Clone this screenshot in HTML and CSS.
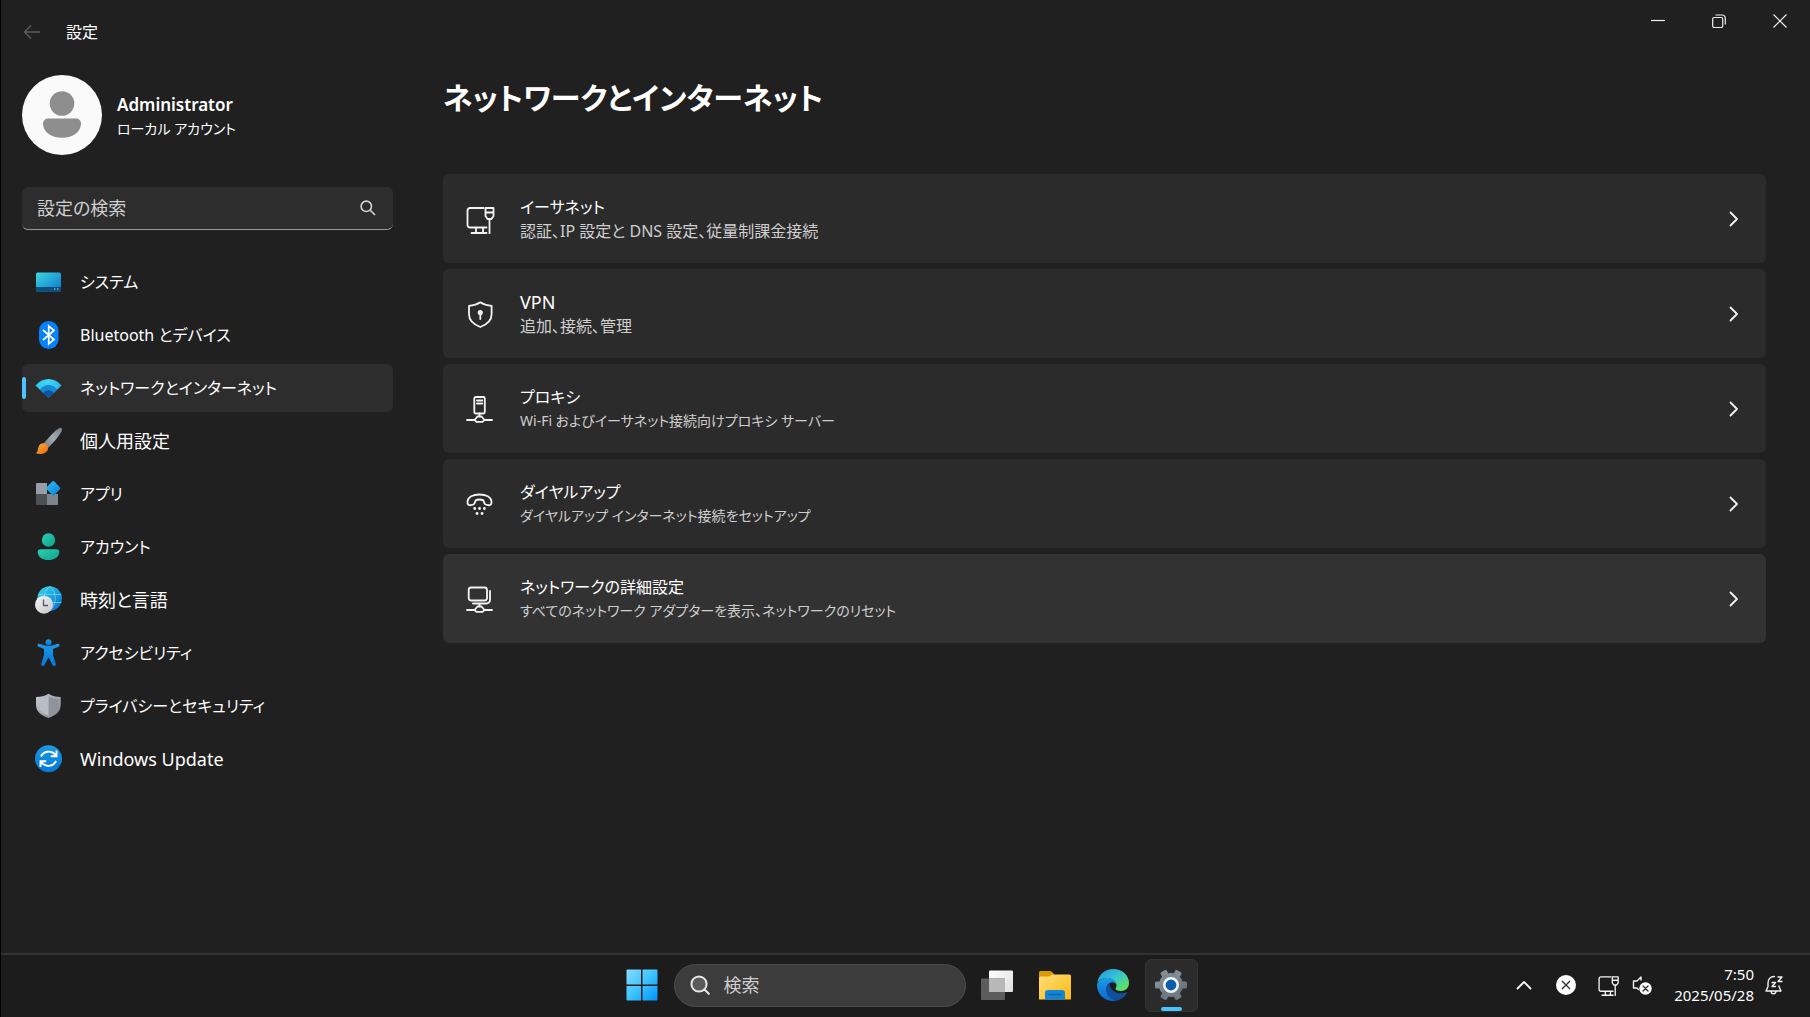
FILE: index.html
```html
<!DOCTYPE html>
<html lang="ja">
<head>
<meta charset="utf-8">
<meta name="viewport" content="width=device-width, initial-scale=1">
<title>設定</title>
<link rel="stylesheet" href="styles.css">
</head>
<body>
<svg class="defs" aria-hidden="true">
  <defs>
    <linearGradient id="g-screen" x1="0" y1="0" x2="1" y2="1"><stop offset="0" stop-color="#3cd8e2"/><stop offset="1" stop-color="#0c74cc"/></linearGradient>
    <linearGradient id="g-wifi" x1="0" y1="0" x2="1" y2="0"><stop offset="0" stop-color="#30c4ec"/><stop offset=".5" stop-color="#40d4f8"/><stop offset="1" stop-color="#28b4ec"/></linearGradient>
    <linearGradient id="g-handle" x1="1" y1="0" x2="0" y2="1"><stop offset="0" stop-color="#77808a"/><stop offset=".5" stop-color="#a4acb2"/><stop offset="1" stop-color="#6d767e"/></linearGradient>
    <linearGradient id="g-bristle" x1="0" y1="0" x2="1" y2="1"><stop offset="0" stop-color="#fcb52f"/><stop offset="1" stop-color="#e8641a"/></linearGradient>
    <linearGradient id="g-diamond" x1="0" y1="0" x2="1" y2="1"><stop offset="0" stop-color="#2fc2f0"/><stop offset="1" stop-color="#0a78d4"/></linearGradient>
    <linearGradient id="g-green" x1="0" y1="0" x2="1" y2="1"><stop offset="0" stop-color="#2bcfb4"/><stop offset="1" stop-color="#10a08a"/></linearGradient>
    <linearGradient id="g-globe" x1="0" y1="0" x2="1" y2="1"><stop offset="0" stop-color="#38dcec"/><stop offset="1" stop-color="#0668c8"/></linearGradient>
    <linearGradient id="g-clock" x1="0" y1="0" x2="1" y2="1"><stop offset="0" stop-color="#f6f6f6"/><stop offset="1" stop-color="#c4c6ca"/></linearGradient>
    <linearGradient id="g-blue" x1="0" y1="0" x2="0" y2="1"><stop offset="0" stop-color="#1c98e6"/><stop offset="1" stop-color="#0478d6"/></linearGradient>
    <linearGradient id="g-shield" x1="0" y1="0" x2="1" y2="1"><stop offset="0" stop-color="#c8ccd2"/><stop offset="1" stop-color="#7e868e"/></linearGradient>
    <linearGradient id="g-start" x1="0" y1="0" x2="32" y2="32" gradientUnits="userSpaceOnUse"><stop offset="0" stop-color="#8cdcff"/><stop offset=".5" stop-color="#3cc4ff"/><stop offset="1" stop-color="#0090fc"/></linearGradient>
    <linearGradient id="g-paper" x1="0" y1="0" x2="1" y2="1"><stop offset="0" stop-color="#ffffff"/><stop offset="1" stop-color="#dedede"/></linearGradient>
    <linearGradient id="g-folder" x1="0" y1="0" x2="1" y2="1"><stop offset="0" stop-color="#ffdf7a"/><stop offset="1" stop-color="#fcb80e"/></linearGradient>
    <linearGradient id="g-edge-top" x1="0" y1="0" x2="1" y2="1"><stop offset="0" stop-color="#2492dc"/><stop offset=".45" stop-color="#34c4d4"/><stop offset="1" stop-color="#6cea3c"/></linearGradient>
    <linearGradient id="g-edge-side" x1="0" y1="0" x2="0" y2="1"><stop offset="0" stop-color="#1a9ce8"/><stop offset="1" stop-color="#0b68cc"/></linearGradient>
    <linearGradient id="g-gear" x1="0" y1="0" x2="32" y2="32" gradientUnits="userSpaceOnUse"><stop offset="0" stop-color="#8f99a2"/><stop offset="1" stop-color="#5f6a74"/></linearGradient>
    <symbol id="ethernet" viewBox="0 0 30 30"><path d="M17.500 4H4a2.500 2.500 0 0 0-2.500 2.500v14.500a2.500 2.500 0 0 0 2.500 2.500h16.500M10 23.500V29M17 23.500V29M5.500 29h15M19.500 4h8v8l-2 3h-4l-2-3zM19.500 8.500h8M23.500 15v14.500"/></symbol>
    <symbol id="chevron" viewBox="0 0 10 16"><path d="m1.500 1.500 6.500 6.500-6.500 6.500"/></symbol>
  </defs>
</svg>

<div class="window">
  <header class="titlebar">
    <button class="back" type="button" aria-label="戻る"><svg width="18" height="16" viewBox="0 0 18 16"><path d="M17 8H1.500M8 1.500 1.500 8 8 14.500"/></svg></button>
    <span class="app-name">設定</span>
    <div class="controls">
      <button type="button" aria-label="最小化"><svg width="14" height="14" viewBox="0 0 14 14"><path d="M0 6.500h14"/></svg></button>
      <button type="button" aria-label="元に戻す"><svg width="14" height="14" viewBox="0 0 14 14"><rect x=".7" y="3.500" width="10" height="10" rx="1.500"/><path d="M3.500 1h6.500a3.200 3.200 0 0 1 3.300 3.300v6.200"/></svg></button>
      <button type="button" aria-label="閉じる"><svg width="14" height="14" viewBox="0 0 14 14"><path d="m.5.5 13 13M13.500.5l-13 13"/></svg></button>
    </div>
  </header>

  <div class="columns">
    <aside class="sidebar">
      <a class="profile" href="#">
        <svg class="avatar" width="80" height="80" viewBox="0 0 80 80"><circle cx="40" cy="40" r="40" fill="#fafafa"/><circle cx="40" cy="28.500" r="12.300" fill="#8e8e8e"/><path d="M26 43.500h28a5 5 0 0 1 5 5C59 57 51 62.800 40 62.800S21 57 21 48.500a5 5 0 0 1 5-5z" fill="#8e8e8e"/></svg>
        <span class="who"><strong>Administrator</strong><span>ローカル アカウント</span></span>
      </a>
      <label class="find">
        <input type="search" placeholder="設定の検索" aria-label="設定の検索">
        <svg width="16" height="16" viewBox="0 0 16 16"><circle cx="6.300" cy="6.300" r="5.200"/><path d="m10 10 5 5"/></svg>
      </label>
      <nav class="nav" aria-label="設定">
        <a href="#" class="kana"><svg width="28" height="28" viewBox="0 0 28 28"><rect x="1" y="4.500" width="25" height="19" rx="1.500" fill="url(#g-screen)"/><path d="M1 19h25v3a1.500 1.500 0 0 1-1.500 1.500h-22A1.500 1.500 0 0 1 1 22z" fill="#0b4f7c"/><path d="M19 21h1.500M22 21h1.500" stroke="#a6d8f0"/></svg>システム</a>
        <a href="#" class="kana"><svg width="28" height="28" viewBox="0 0 28 28"><rect x="4" y="0" width="19.500" height="28" rx="9.700" fill="#0582fa"/><path d="m8 9 11 9.500-5.300 4.500V5L19 9.500 8 19" fill="none" stroke="#fff" stroke-width="1.700"/></svg>Bluetooth とデバイス</a>
        <a href="#" class="kana current" aria-current="page"><svg width="28" height="28" viewBox="0 0 28 28"><path d="M.5 11.500C4.500 7 9 5 13.500 5s9 2 13 6.500L13.500 23.700z" fill="url(#g-wifi)"/><path d="M4.800 15.400C7.500 12.500 10.300 11 13.500 11s6 1.500 8.700 4.400l-8.700 8.300z" fill="#1688d8"/><path d="M8.300 18.800c1.500-1.700 3.200-2.600 5.200-2.600s3.700.9 5.200 2.600l-5.200 4.900z" fill="#0c549c"/></svg>ネットワークとインターネット</a>
        <a href="#"><svg width="28" height="28" viewBox="0 0 28 28"><path d="M8.500 16.500C14 10 19 4.500 24 1.200c1.600-1 3.600.4 2.800 2.500C24.500 8.500 19 15 13 21z" fill="url(#g-handle)"/><path d="M7 16.500c3-1 6.700 2 6 5.500C12 27 5 28 .5 26c2.500-.5 2-2.500 2.700-5 .5-2.300 1.800-4 3.800-4.500z" fill="url(#g-bristle)"/></svg>個人用設定</a>
        <a href="#" class="kana"><svg width="28" height="28" viewBox="0 0 28 28"><path d="M2 3h10v11H1V4a1 1 0 0 1 1-1z" fill="#989ea6"/><path d="M1 14h11v11H2a1 1 0 0 1-1-1z" fill="#4c5156"/><path d="M12 14h11v10a1 1 0 0 1-1 1H12z" fill="#7e848b"/><path d="m17.500 1.300-5.800 6a1.400 1.400 0 0 0 0 1.900l5.800 6q.8.800 1.600 0l5.800-6a1.400 1.400 0 0 0 0-1.900l-5.800-6q-.8-.8-1.600 0z" fill="url(#g-diamond)"/></svg>アプリ</a>
        <a href="#" class="kana"><svg width="28" height="28" viewBox="0 0 28 28"><circle cx="13.500" cy="7" r="6.700" fill="url(#g-green)"/><path d="M5.500 16.200h16a2.800 2.800 0 0 1 2.800 2.800c0 5-4.800 8.100-10.800 8.100S2.700 24 2.700 19a2.800 2.800 0 0 1 2.800-2.800z" fill="url(#g-green)"/></svg>アカウント</a>
        <a href="#"><svg width="28" height="28" viewBox="0 0 28 28"><circle cx="14.700" cy="12.500" r="12.300" fill="url(#g-globe)"/><path d="M3.500 8.500h22.500M3 16.500h23.500M14.700.3c-7.500 6-7.500 18 0 24.400M14.700.3c7.500 6 7.500 18 0 24.400" fill="none" stroke="#7fe0f4" stroke-opacity=".65"/><circle cx="9" cy="18.700" r="9" fill="url(#g-clock)"/><path d="M8.500 13.500v6h4.500" fill="none" stroke="#555a60" stroke-width="1.300"/></svg>時刻と言語</a>
        <a href="#" class="kana"><svg width="28" height="28" viewBox="0 0 28 28" fill="url(#g-blue)"><circle cx="13.500" cy="3.200" r="3"/><path d="M4.500 4.800c3 1.200 6 2.200 9 2.200s6-1 9-2.200c1.900-.6 2.800 2 1 2.900L18 10v6l2.800 9c.4 2-2.400 3-3.300 1L14 19h-1l-3.500 7c-.9 2-3.700 1-3.300-1L9 16v-6L3.500 7.700c-1.800-.9-.9-3.500 1-2.900z"/></svg>アクセシビリティ</a>
        <a href="#" class="kana"><svg width="28" height="28" viewBox="0 0 28 28"><path d="M13.500 1.700C17 4 21 5 25.700 5v8c0 6.500-5 10.500-12.200 13C6 23.500 1 19.500 1 13V5c4.700 0 9-1 12.500-3.300z" fill="url(#g-shield)"/><path d="M13.500 4.200c3 1.900 6.200 2.700 10 2.900V13c0 5-4 8.300-10 10.500z" fill="#8d949c"/><path d="M13.500 4.200c-3 1.900-6.200 2.700-10.200 2.900V13c0 5 4 8.300 10.200 10.500z" fill="#b9bec4"/></svg>プライバシーとセキュリティ</a>
        <a href="#"><svg width="28" height="28" viewBox="0 0 28 28"><circle cx="13.500" cy="13.700" r="13.500" fill="url(#g-blue)"/><path d="M6 11.500C8.500 6 16 4.800 20.500 9.800M21.500 5.500v5.700h-5.700M21 16c-2.500 5.500-10 6.700-14.500 1.700M5.500 22v-5.700h5.700" fill="none" stroke="#fff" stroke-width="1.900"/></svg>Windows Update</a>
      </nav>
    </aside>

    <main class="content">
      <h1>ネットワークとインターネット</h1>
      <div class="cards">
        <a class="card" href="#">
          <svg class="line" width="30" height="30"><use href="#ethernet"/></svg>
          <span class="text"><span class="kana">イーサネット</span><span class="about">認証、IP 設定と DNS 設定、従量制課金接続</span></span>
          <svg class="line" width="10" height="16"><use href="#chevron"/></svg>
        </a>
        <a class="card" href="#">
          <svg class="line" width="30" height="30" viewBox="0 0 30 30"><path d="M14.300 3.300c3.200 2.200 7 3.200 11.300 3.500v8.500c0 6-4.500 10.200-11.300 12.700C7.500 25.500 3 21.300 3 15.300V6.800c4.300-.3 8.100-1.300 11.300-3.500z"/><circle cx="14.300" cy="13.500" r="1.700" fill="#fff"/><path d="M14.300 14v6"/></svg>
          <span class="text"><span>VPN</span><span class="about">追加、接続、管理</span></span>
          <svg class="line" width="10" height="16"><use href="#chevron"/></svg>
        </a>
        <a class="card" href="#">
          <svg class="line" width="30" height="30" viewBox="0 0 30 30"><rect x="8.300" y="3" width="10.500" height="16.500" rx="1.500"/><path d="M11 6.500h5.300M11 9.500h5.300M13.500 19.500v3M1 26h7.500M18.500 26H26M8.500 26l3-3.500h4l3 3.500-2 1.800h-6z"/></svg>
          <span class="text"><span class="kana">プロキシ</span><span class="about kana">Wi-Fi およびイーサネット接続向けプロキシ サーバー</span></span>
          <svg class="line" width="10" height="16"><use href="#chevron"/></svg>
        </a>
        <a class="card" href="#">
          <svg class="line" width="30" height="30" viewBox="0 0 30 30"><path d="M13.500 5.500c6.500 0 11.500 2.500 12 7 .2 3-1.200 4-3.500 3.700-2.800-.3-3.800-1-4-3.200-.1-1.700-1.500-2.500-4.500-2.500S9.100 11.300 9 13c-.2 2.200-1.200 2.900-4 3.200-2.300.3-3.700-.7-3.500-3.700.5-4.500 5.500-7 12-7z"/><path d="M8.700 19.500h.1M13.500 19.500h.1M18.300 19.500h.1M11 24.500h.1M16 24.500h.1" stroke-width="2.800"/></svg>
          <span class="text"><span class="kana">ダイヤルアップ</span><span class="about kana">ダイヤルアップ インターネット接続をセットアップ</span></span>
          <svg class="line" width="10" height="16"><use href="#chevron"/></svg>
        </a>
        <a class="card hovered" href="#">
          <svg class="line" width="30" height="30" viewBox="0 0 30 30"><rect x="2.700" y="3.500" width="18.300" height="13" rx="2.500"/><path d="M24 7v9a3.500 3.500 0 0 1-3.500 3.500H7M13.500 19.500v3M1 26h7.500M18.500 26H26M8.500 26l3-3.500h4l3 3.500-2 1.800h-6z"/></svg>
          <span class="text"><span class="kana">ネットワークの詳細設定</span><span class="about kana">すべてのネットワーク アダプターを表示、ネットワークのリセット</span></span>
          <svg class="line" width="10" height="16"><use href="#chevron"/></svg>
        </a>
      </div>
    </main>
  </div>
</div>

<footer class="taskbar">
  <div class="apps">
    <button type="button" aria-label="スタート"><svg width="32" height="32" viewBox="0 0 32 32" fill="url(#g-start)"><path d="M1.500.5H15v15H.5v-14a1 1 0 0 1 1-1zM16.500.5h14a1 1 0 0 1 1 1v14h-15zM.5 17H15v14.500H1.500a1 1 0 0 1-1-1zM16.500 17h15v13.500a1 1 0 0 1-1 1h-14z"/></svg></button>
    <label class="search">
      <svg width="20" height="20" viewBox="0 0 20 20"><circle cx="9" cy="9" r="7.600" fill="#5a5a5a"/><path d="m14.500 14.500 4.300 4.300"/></svg>
      <input type="search" placeholder="検索" aria-label="検索">
    </label>
    <button type="button" aria-label="タスク ビュー"><svg width="32" height="32" viewBox="0 0 32 32"><rect x="8" y="1.500" width="24" height="21.500" rx="1" fill="url(#g-paper)"/><rect y="9.500" width="24" height="21.500" rx="1" fill="#5c5c5c"/><path d="M8 9.500h15a1 1 0 0 1 1 1V23H8z" fill="#b8b8b8"/></svg></button>
    <button type="button" aria-label="エクスプローラー"><svg width="32" height="32" viewBox="0 0 32 32"><path d="M1.500 2h9.500q1 0 1.800.8L15 5v6H0V3.500A1.500 1.500 0 0 1 1.500 2z" fill="#dc9a04"/><path d="M13 5.500h17.500A1.500 1.500 0 0 1 32 7v23.500H0V9q0-1.500 1.500-1.500h8q1 0 1.800-.8z" fill="url(#g-folder)"/><path d="M6 30.500V24a3 3 0 0 1 3-3h14a3 3 0 0 1 3 3v6.500z" fill="#1484d6"/><path d="M10 25.500h12" stroke="#0a64b0" stroke-width="1.500" stroke-linecap="round"/></svg></button>
    <button type="button" aria-label="Microsoft Edge"><svg width="32" height="32" viewBox="0 0 32 32"><path d="M.3 14C1.500 5.500 8 0 16 0c9 0 16 6 16 14 0 5-3.700 8-8 8-3.800 0-5.500-1.200-5.500-2.200 0-.8 1-1.300 1-3.300 0-3.300-3.800-7.500-9.500-7.500C5 9 1.500 11 .3 14z" fill="url(#g-edge-top)"/><path d="M0 16C.5 11.500 5 8.800 10 8.800c5 0 8.800 3 9.400 6.700-1-1.500-2.500-2.300-4-2.300-4 0-6.900 4-5.700 8.800C11 27.500 15.500 31 20.500 31.300 18.900 31.900 17.500 32 16 32 7 32 0 25 0 16z" fill="url(#g-edge-side)"/><path d="M12.500 14.200c-3.500 2.500-4.500 8.300-1.700 12.300 3 4.400 8 5.600 11.700 4.200 3.300-1.300 5.800-3.700 7.500-6.700.3-.7-.2-1-.8-.7-1.400.7-3 1-5 1-6.500 0-11.400-3.800-11.700-10.100z" fill="#0f4f9e"/></svg></button>
    <button type="button" class="active" aria-label="設定"><svg width="32" height="32" viewBox="0 0 32 32"><g fill="url(#g-gear)"><circle cx="16" cy="16" r="12"/><rect y="12.500" width="32" height="7" rx="1.500"/><rect y="12.500" width="32" height="7" rx="1.500" transform="rotate(60 16 16)"/><rect y="12.500" width="32" height="7" rx="1.500" transform="rotate(120 16 16)"/></g><circle cx="16" cy="16" r="6.700" fill="#0b5cac" stroke="#f0f2f4" stroke-width="2.600"/></svg></button>
  </div>
  <div class="tray">
    <button type="button" class="more" aria-label="隠れているインジケーターを表示"><svg class="line" width="16" height="10" viewBox="0 0 16 10"><path d="m1.500 8.500 6.500-6.500 6.500 6.500"/></svg></button>
    <button type="button" aria-label="通知状態"><svg width="20" height="20" viewBox="0 0 20 20"><circle cx="10" cy="10" r="10" fill="#fff"/><path d="m6 6 8 8M14 6l-8 8" stroke="#333" stroke-width="1.400"/></svg></button>
    <button type="button" class="status" aria-label="ネットワークと音量"><svg class="line" width="22" height="22"><use href="#ethernet"/></svg><svg class="line thin" width="20" height="20" viewBox="0 0 20 20"><path d="M9 2v3M9 2 5 6H1.500v7H5l1.500 1.500"/><circle cx="13.500" cy="13.500" r="6.200" fill="#fff" stroke="none"/><path d="m11 11 5 5M16 11l-5 5" stroke="#333"/></svg></button>
    <button type="button" class="clock"><span>7:50</span><span>2025/05/28</span></button>
    <button type="button" aria-label="通知"><svg class="line thin" width="20" height="20" viewBox="0 0 20 20"><path d="M10.500 1.500C6 1.500 4 4.500 4 8v3.500L2 16h15l-2-4.500V11M7 16.500c.5 3 4.500 3 5 0M8 7.500h3.500L8 11.500h3.500M14 2h4l-4 4.500h4"/></svg></button>
  </div>
</footer>
</body>
</html>
```
FILE: styles.css
```css
* {
  box-sizing: border-box;
}

body {
  margin: 0;
  min-height: 100vh;
  display: flex;
  flex-direction: column;
  border-left: 1px solid #000;
  background: #202020;
  color: #fff;
  font-family: "Noto Sans", "Noto Sans CJK JP", sans-serif;
  font-feature-settings: "palt";
  font-size: 18px;
  line-height: 24px;
}

a {
  color: inherit;
  text-decoration: none;
}

button,
input {
  margin: 0;
  padding: 0;
  border: 0;
  background: none;
  color: inherit;
  font: inherit;
  font-feature-settings: inherit;
  outline: 0;
}

svg {
  display: block;
  flex: none;
}

.defs {
  position: absolute;
  width: 0;
  height: 0;
}

.line {
  fill: none;
  stroke: #f4f4f4;
  stroke-width: 1.8;
  stroke-linecap: round;
  stroke-linejoin: round;
}

.line.thin {
  stroke-width: 1.4;
}

.kana {
  font-size: 16px;
}

.window {
  flex: 1;
}

/* Title bar */
.titlebar {
  display: flex;
  align-items: flex-start;
  height: 64px;
}

.back {
  padding: 24px 25px 24px 22px;
  stroke: #5c5c5c;
  stroke-width: 1.4;
  fill: none;
}

.app-name {
  padding-top: 20px;
  font-size: 16px;
}

.controls {
  display: flex;
  margin-left: auto;
}

.controls button {
  display: grid;
  place-items: center;
  width: 61px;
  height: 42px;
  fill: none;
  stroke: #f0f0f0;
  stroke-width: 1.2;
}

.columns {
  display: flex;
  gap: 50px;
  padding: 0 44px 24px 21px;
}

/* Sidebar */
.sidebar {
  flex: none;
  width: 371px;
  padding-top: 11px;
}

.profile {
  display: flex;
  align-items: center;
  gap: 15px;
}

.who {
  display: flex;
  flex-direction: column;
  padding-top: 4px;
  font-size: 14px;
}

.who strong {
  font-size: 17px;
  font-weight: 600;
}

.find {
  display: flex;
  align-items: center;
  height: 43px;
  margin-top: 32px;
  padding: 0 17px 0 15px;
  border-bottom: 1px solid #9a9a9a;
  border-radius: 6px;
  background: #2d2d2d;
}

.find input {
  flex: 1;
  min-width: 0;
}

.find svg {
  fill: none;
  stroke: #d4d4d4;
  stroke-width: 1.6;
}

input::placeholder {
  color: #cfcfcf;
  opacity: 1;
}

.nav {
  display: grid;
  gap: 5px;
  margin-top: 28px;
}

.nav a {
  display: flex;
  align-items: center;
  gap: 17px;
  height: 48px;
  padding-left: 13px;
  border-radius: 6px;
}

.nav .current {
  position: relative;
  background: #2d2d2d;
}

.nav .current::before {
  content: "";
  position: absolute;
  left: 0;
  top: 13px;
  width: 4px;
  height: 22px;
  border-radius: 2px;
  background: #4cc2ff;
}

/* Content */
.content {
  flex: 1;
  min-width: 0;
}

h1 {
  margin: 10px 0 0;
  font-size: 30px;
  font-weight: 600;
  line-height: 48px;
}

.cards {
  display: grid;
  gap: 6px;
  margin-top: 52px;
}

.card {
  display: flex;
  align-items: center;
  min-height: 89px;
  padding: 0 27px 0 23px;
  border-radius: 6px;
  background: #2b2b2b;
}

.card.hovered {
  background: #323232;
}

.card .text {
  flex: 1;
  display: flex;
  flex-direction: column;
  padding-left: 24px;
}

.about {
  color: #cfcfcf;
  font-size: 16px;
}

.about.kana {
  font-size: 14px;
}

/* Taskbar */
.taskbar {
  display: grid;
  grid-template-columns: 1fr auto 1fr;
  align-items: center;
  height: 64px;
  padding: 0 26px 2px 28px;
  border-top: 2px solid #333;
  background: #1c1c1c;
}

.apps {
  grid-column: 2;
  display: flex;
  align-items: center;
  gap: 5px;
}

.apps button {
  display: grid;
  place-items: center;
  width: 53px;
  height: 53px;
  border-radius: 6px;
}

.apps .active {
  position: relative;
  border: 1px solid #333;
  background: #2b2b2b;
}

.apps .active::after {
  content: "";
  position: absolute;
  left: 15px;
  bottom: 0;
  width: 21px;
  height: 4px;
  border-radius: 2px;
  background: #4cc2ff;
}

.search {
  display: flex;
  align-items: center;
  gap: 14px;
  width: 292px;
  height: 43px;
  padding-left: 15px;
  border: 1px solid #4e4e4e;
  border-radius: 22px;
  background: #3c3c3c;
}

.search svg {
  stroke: #e8e8e8;
  stroke-width: 2;
  stroke-linecap: round;
}

.search input {
  flex: 1;
  min-width: 0;
}

.tray {
  grid-column: 3;
  justify-self: end;
  display: flex;
  align-items: center;
}

.more {
  margin-right: 24px;
}

.status {
  display: flex;
  align-items: center;
  gap: 12px;
  margin: 0 22px 0 22px;
}

.clock {
  display: flex;
  flex-direction: column;
  align-items: flex-end;
  margin-right: 10px;
  font-size: 15px;
  line-height: 21px;
}
```
